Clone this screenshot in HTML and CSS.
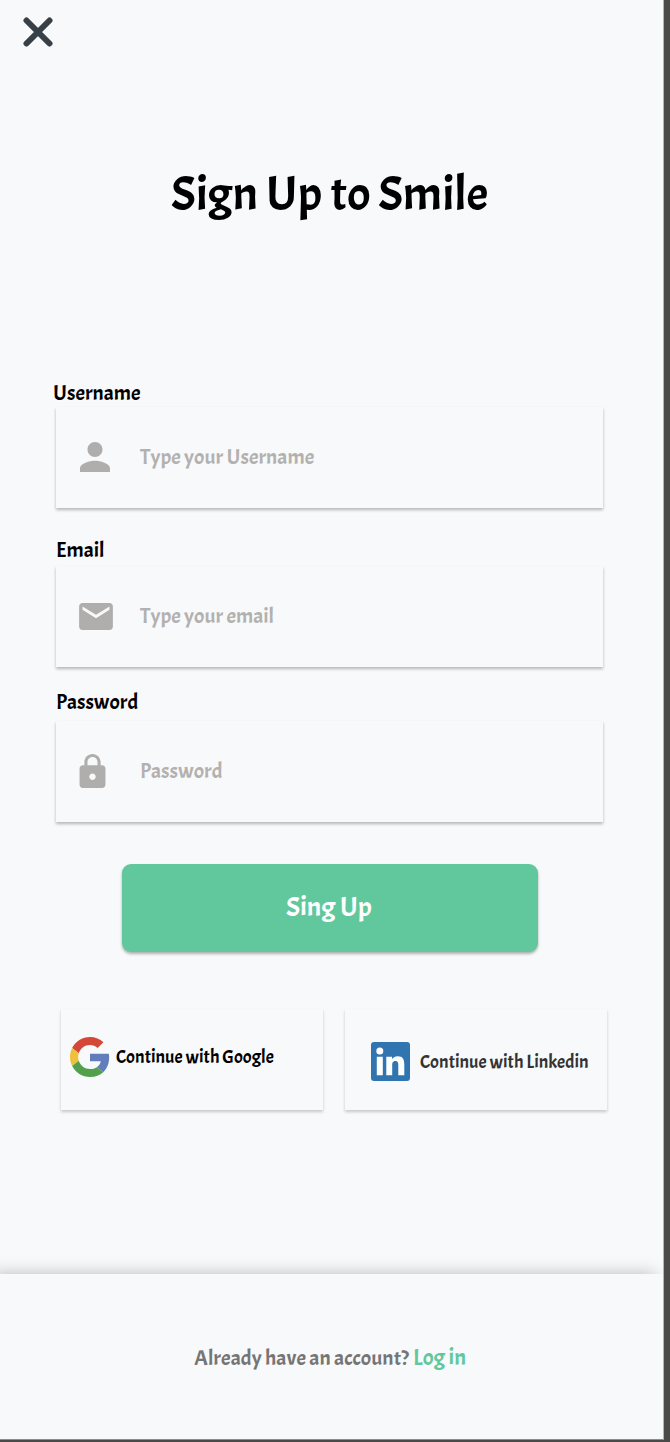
FILE: index.html
```html
<!DOCTYPE html>
<html lang="en">
<head>
<meta charset="utf-8">
<title>Sign Up to Smile</title>
<link rel="stylesheet" href="styles.css">
</head>
<body>
<main class="screen">
  <header class="top">
    <svg class="close" viewBox="0 0 30 30"><path d="M3.500 3.500L26.500 26.500M26.500 3.500L3.500 26.500"/></svg>
  </header>
  <h1 class="title">Sign Up to Smile</h1>
  <form class="form">
    <div class="label label-user">Username</div>
    <div class="field">
      <svg class="icon icon-user" viewBox="4 4 16 16"><path d="M12 12c2.210 0 4-1.790 4-4s-1.790-4-4-4-4 1.790-4 4 1.790 4 4 4zm0 2c-2.670 0-8 1.340-8 4v2h16v-2c0-2.660-5.330-4-8-4z"/></svg>
      <span class="ph">Type your Username</span>
    </div>
    <div class="label label-email">Email</div>
    <div class="field">
      <svg class="icon icon-mail" viewBox="2 4 20 16"><path d="M20 4H4c-1.100 0-2 .9-2 2v12c0 1.100.9 2 2 2h16c1.100 0 2-.9 2-2V6c0-1.100-.9-2-2-2zm0 4l-8 5-8-5V6l8 5 8-5v2z"/></svg>
      <span class="ph">Type your email</span>
    </div>
    <div class="label label-pass">Password</div>
    <div class="field">
      <svg class="icon icon-lock" viewBox="4 1 16 21"><path d="M18 8h-1V6c0-2.760-2.240-5-5-5S7 3.240 7 6v2H6c-1.100 0-2 .9-2 2v10c0 1.100.9 2 2 2h12c1.100 0 2-.9 2-2V10c0-1.100-.9-2-2-2zm-6 9c-1.100 0-2-.9-2-2s.9-2 2-2 2 .9 2 2-.9 2-2 2zm3.100-9H8.900V6c0-1.710 1.390-3.100 3.100-3.100s3.100 1.390 3.100 3.100v2z"/></svg>
      <span class="ph">Password</span>
    </div>
    <div class="submit">Sing Up</div>
  </form>
  <div class="social">
    <div class="provider google">
      <svg class="logo-google" viewBox="0 0 48 48">
        <path fill="#d34836" d="M24 9.500c3.540 0 6.710 1.220 9.210 3.600l6.850-6.850C35.900 2.380 30.470 0 24 0 14.620 0 6.510 5.380 2.560 13.220l7.980 6.190C12.430 13.720 17.740 9.500 24 9.500z"/>
        <path fill="#617dbc" d="M46.980 24.550c0-1.570-.15-3.090-.38-4.550H24v9.020h12.940c-.58 2.960-2.260 5.480-4.780 7.180l7.730 6c4.510-4.180 7.090-10.360 7.090-17.650z"/>
        <path fill="#f0c03c" d="M10.530 28.590c-.48-1.450-.76-2.990-.76-4.590s.27-3.140.76-4.590l-7.980-6.190C.92 16.460 0 20.120 0 24s.92 7.540 2.560 10.780z"/>
        <path fill="#52a04b" d="M24 48c6.480 0 11.930-2.130 15.890-5.810l-7.730-6c-2.150 1.450-4.920 2.300-8.160 2.300-6.260 0-11.570-4.220-13.470-9.910l-7.980 6.190C6.510 42.620 14.620 48 24 48z"/>
      </svg>
      <span class="provider-name">Continue with Google</span>
    </div>
    <div class="provider linkedin">
      <svg class="logo-linkedin" viewBox="0 0 39 39">
        <rect width="39" height="39" rx="3" fill="#3175b0"/>
        <g fill="#fff"><circle cx="8.800" cy="9" r="3.500"/><path d="M5.800 14.700h6v18.500h-6zM15.300 14.700H21v2.500c.9-1.600 2.900-3 5.700-3 5.300 0 6.600 3.500 6.600 8.300v10.700h-6v-9.700c0-2.300-.1-4.500-2.900-4.500s-3.200 2.200-3.200 4.400v9.800h-5.900z"/></g>
      </svg>
      <span class="provider-name">Continue with Linkedin</span>
    </div>
  </div>
  <footer class="footer">
    <span class="question">Already have an account?</span>
    <span class="login">Log in</span>
  </footer>
</main>
</body>
</html>
```
FILE: styles.css
```css
* { box-sizing: border-box; }
body {
  margin: 0;
  height: 1442px;
  overflow: hidden;
  background: #4a4a48;
  font-family: Acme, Lato, sans-serif;
  font-weight: 400;
  color: #000;
  white-space: nowrap;
}
.screen {
  display: flex;
  flex-direction: column;
  width: 664px;
  height: 1440px;
  background: #f8f9fb;
  border-right: 1px solid #b4b5b6;
  border-bottom: 1px solid #8c8c8c;
  overflow: hidden;
}
.top { height: 164px; padding: 17px 0 0 23px; }
.close { display: block; width: 30px; height: 30px; fill: none; stroke: #373f47; stroke-width: 6; stroke-linecap: round; }
.title { margin: 0; padding-left: 171px; height: 217px; font-size: 49px; font-weight: 400; line-height: 60px; }

.form { padding-left: 56px; }
.label { height: 24px; line-height: 24px; font-size: 21.450px; }
.label-user { margin: 0 0 2px -3px; }
.label-email { margin: 30px 0 4px; }
.label-pass { margin: 23px 0 7px; }
.field {
  display: flex;
  width: 547px;
  height: 101px;
  background: #f8f9fb;
  box-shadow: 0 2px 3px rgba(0, 0, 0, .27);
}
.icon { flex: none; fill: #b0aeac; }
.icon-user { width: 30px; height: 30px; margin: 35px 30px 0 24px; }
.icon-mail { width: 34px; height: 27px; margin: 37px 27px 0 23px; }
.icon-lock { width: 27px; height: 34px; margin: 33px 34px 0 23px; }
.ph { margin-top: 38px; line-height: 24px; font-size: 21.500px; color: #b3b1af; }
.submit {
  width: 416px;
  height: 88px;
  margin: 42px 0 0 66px;
  padding-left: 164px;
  border-radius: 9px;
  background: #61c89d;
  box-shadow: 0 2px 3px rgba(0, 0, 0, .3);
  color: #fff;
  font-size: 27.800px;
  line-height: 87px;
}

.social { display: flex; gap: 22px; margin: 57px 0 164px 61px; }
.provider {
  display: flex;
  width: 262px;
  height: 101px;
  background: #f8f9fb;
  box-shadow: 0 2px 3px rgba(0, 0, 0, .2);
  font-size: 18.350px;
  line-height: 24px;
}
.logo-google { flex: none; width: 40px; height: 40px; margin: 28px 6px 0 9px; }
.google .provider-name { margin-top: 36px; }
.logo-linkedin { flex: none; width: 39px; height: 39px; margin: 33px 10px 0 26px; }
.linkedin .provider-name { margin-top: 41px; color: #333; }

.footer {
  display: flex;
  flex: none;
  height: 165px;
  margin-left: -16px;
  padding: 72px 0 0 210px;
  box-shadow: 0 -8px 16px -8px rgba(0, 0, 0, .25);
  background: #f8f9fb;
  font-size: 21.600px;
  line-height: 24px;
}
.question { width: 219px; color: #757575; }
.login { color: #61c89d; font-size: 22.700px; }
```
